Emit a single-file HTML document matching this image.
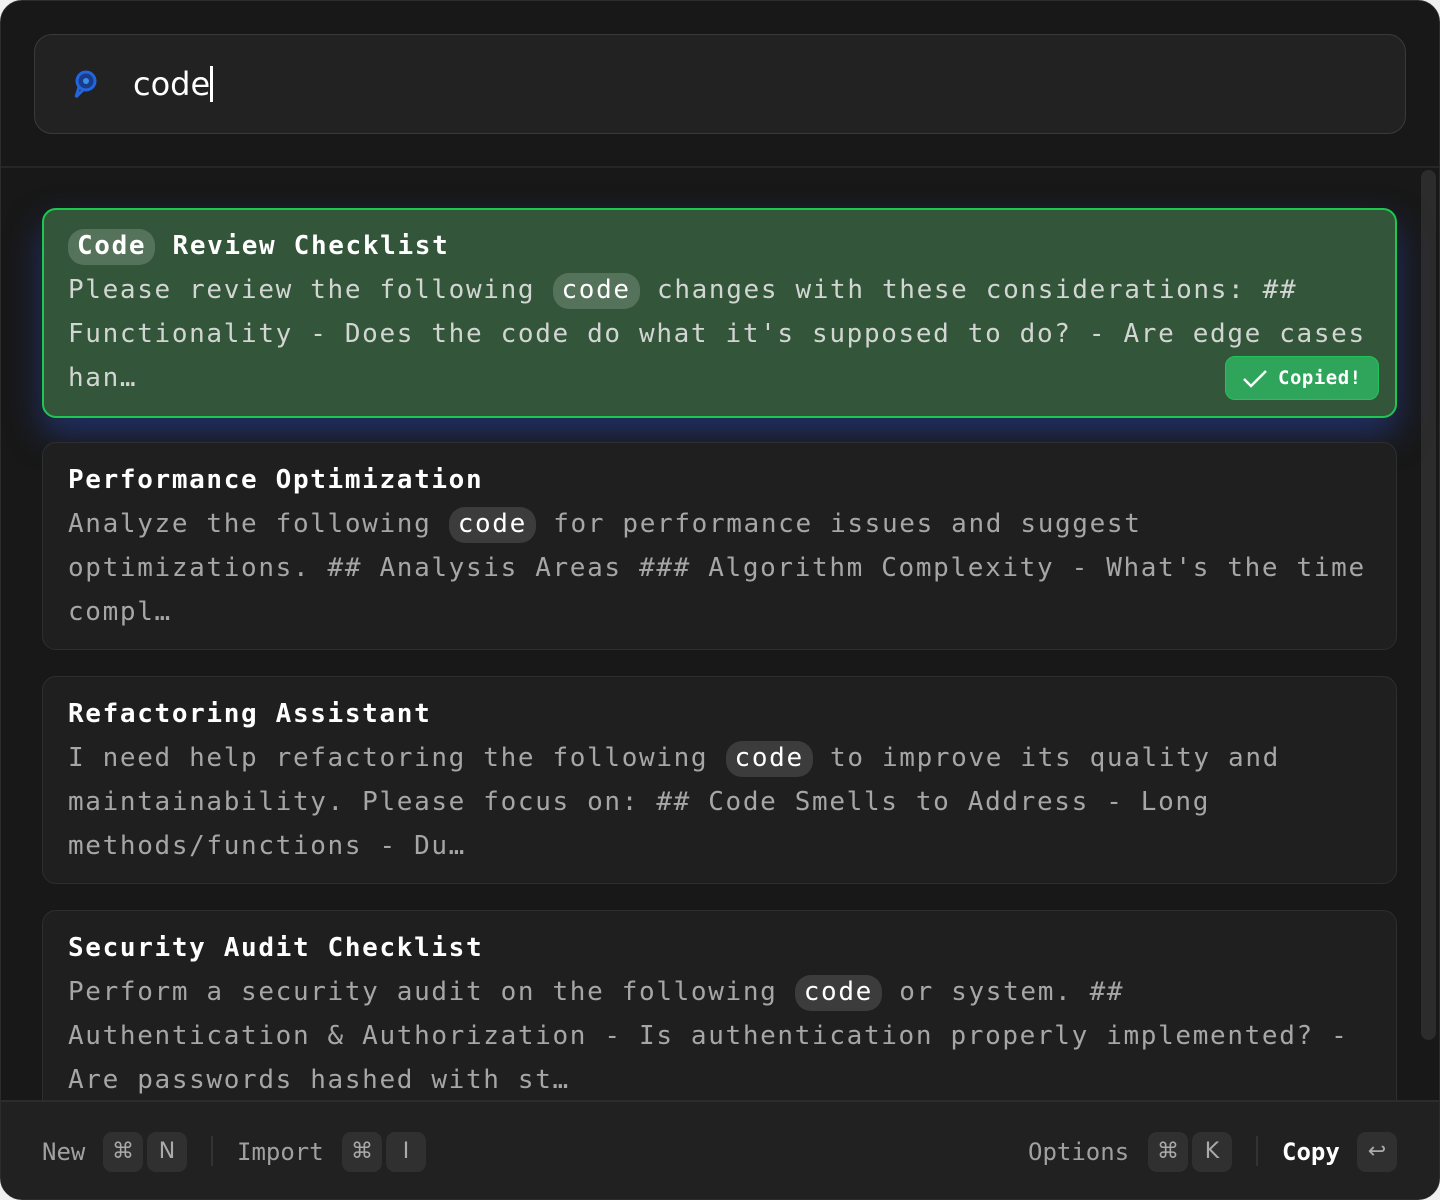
<!DOCTYPE html>
<html><head><meta charset="utf-8"><style>
html,body{margin:0;padding:0;background:#f0f0f0;width:1440px;height:1200px;overflow:hidden}
.win{position:absolute;left:0;top:0;width:1438px;height:1198px;border:1px solid #2c2c2c;border-radius:22px;background:#181818;overflow:hidden;font-family:"DejaVu Sans Mono","Liberation Mono",monospace}
.search{position:absolute;left:33px;top:33px;width:1370px;height:98px;border:1px solid #3a3a3a;border-radius:18px;background:#222}
.search .q{position:absolute;left:98px;top:29px;font-family:"DejaVu Sans","Liberation Sans",sans-serif;font-size:32px;color:#fff;line-height:40px}
.caret{display:inline-block;width:3px;height:36px;background:#fff;vertical-align:-7px;margin-left:0}
.sep{position:absolute;left:0;top:165px;width:100%;height:2px;background:#262626}
.scroll{position:absolute;left:1420px;top:169px;width:15px;height:870px;border-radius:8px;background:#2c2c2c}
.card{position:absolute;left:41px;width:1355px;height:208px;border:1px solid #2e2e2e;border-radius:14px;background:#1f1f1f;box-sizing:border-box;padding:15px 25px 0}
.card.sel{background:#33553a;border:2px solid #1ec84f;padding:14px 24px 0;box-shadow:0 16px 34px rgba(40,70,170,.55)}
.t{font-size:26px;letter-spacing:1.65px;font-weight:bold;color:#fff;line-height:44px;white-space:nowrap}
.b{font-size:26px;letter-spacing:1.65px;color:#a6a6a6;line-height:44px;white-space:pre-wrap}
.sel .b{color:#d2d6d2}
.hl{background:#3c3c3c;color:#fff;border-radius:16px;padding:2px 9px 4px 9px}
.sel .hl{background:#55735a}
.copied{position:absolute;right:16px;bottom:16px;width:154px;height:44px;border-radius:10px;background:#2ea55a;border:1px solid #22c35a;box-sizing:border-box;color:#fff;font-weight:bold;font-size:19px;letter-spacing:.5px;line-height:42px}
.copied svg{position:absolute;left:16px;top:12px}
.copied span{position:absolute;left:52px}
.foot{position:absolute;left:0;top:1099px;width:100%;height:100px;background:#212121;border-top:2px solid #2c2c2c}
.fi{position:absolute;top:30px;font-size:24px;line-height:40px;color:#a0a0a0;letter-spacing:0}
.k{position:absolute;top:30px;width:40px;height:40px;border-radius:9px;background:#303030;color:#aaa;text-align:center;line-height:40px;font-size:22px;font-family:"DejaVu Sans",sans-serif}
.vs{position:absolute;top:34px;width:2px;height:30px;background:#333}
</style></head><body>
<div class="win">
<div class="search">
<svg style="position:absolute;left:37px;top:34px" width="26" height="30" viewBox="0 0 26 30"><circle cx="14" cy="12" r="9" fill="#1a3a8a" stroke="#2266dd" stroke-width="3"/><circle cx="14" cy="12" r="3" fill="#3b8fe0"/><path d="M7 18 L4 28 L11 21" fill="none" stroke="#2266dd" stroke-width="3"/></svg>
<div class="q">code<span class="caret"></span></div>
</div>
<div class="sep"></div>
<div class="scroll"></div>

<div class="card sel" style="top:207px;height:210px">
<div class="t"><span class="hl">Code</span> Review Checklist</div>
<div class="b">Please review the following <span class="hl">code</span> changes with these considerations: ##
Functionality - Does the code do what it's supposed to do? - Are edge cases
han…</div>
<div class="copied"><svg width="26" height="20" viewBox="0 0 26 20"><path d="M2 10 L9 17 L24 2" fill="none" stroke="#fff" stroke-width="2.5"/></svg><span>Copied!</span></div>
</div>

<div class="card" style="top:441px">
<div class="t">Performance Optimization</div>
<div class="b">Analyze the following <span class="hl">code</span> for performance issues and suggest
optimizations. ## Analysis Areas ### Algorithm Complexity - What's the time
compl…</div>
</div>

<div class="card" style="top:675px">
<div class="t">Refactoring Assistant</div>
<div class="b">I need help refactoring the following <span class="hl">code</span> to improve its quality and
maintainability. Please focus on: ## Code Smells to Address - Long
methods/functions - Du…</div>
</div>

<div class="card" style="top:909px">
<div class="t">Security Audit Checklist</div>
<div class="b">Perform a security audit on the following <span class="hl">code</span> or system. ##
Authentication &amp; Authorization - Is authentication properly implemented? -
Are passwords hashed with st…</div>
</div>

<div class="foot">
<div class="fi" style="left:41px">New</div>
<div class="k" style="left:102px">⌘</div>
<div class="k" style="left:146px">N</div>
<div class="vs" style="left:210px"></div>
<div class="fi" style="left:236px">Import</div>
<div class="k" style="left:341px">⌘</div>
<div class="k" style="left:385px">I</div>
<div class="fi" style="left:1027px">Options</div>
<div class="k" style="left:1147px">⌘</div>
<div class="k" style="left:1191px">K</div>
<div class="vs" style="left:1255px"></div>
<div class="fi" style="left:1281px;color:#fff;font-weight:bold">Copy</div>
<div class="k" style="left:1356px">↩</div>
</div>
</div>
</body></html>
